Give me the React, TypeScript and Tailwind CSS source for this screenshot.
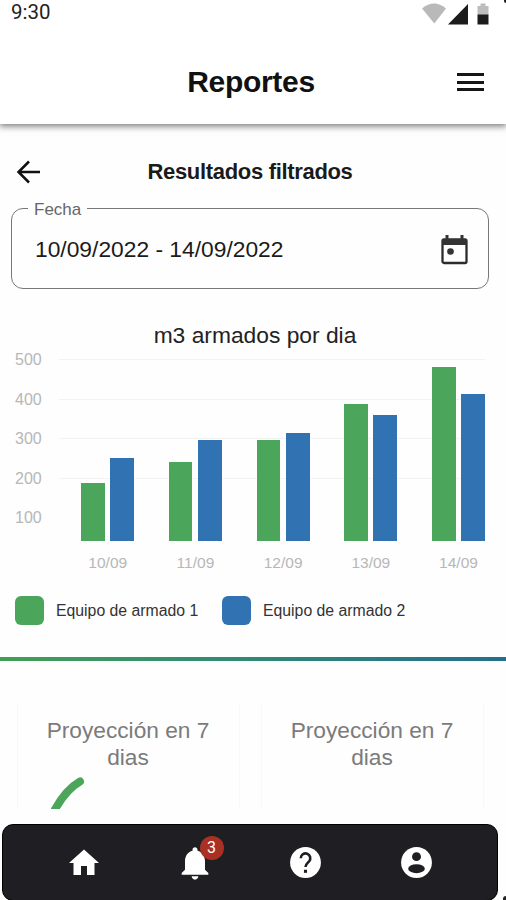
import React from 'react'

const CHART_FLOOR = 42
const PX_PER_UNIT = 0.395

const days = [
  { label: '10/09', team1: 190, team2: 253 },
  { label: '11/09', team1: 241, team2: 298 },
  { label: '12/09', team1: 298, team2: 315 },
  { label: '13/09', team1: 390, team2: 360 },
  { label: '14/09', team1: 482, team2: 413 },
]

const ticks = [500, 400, 300, 200, 100]

const barHeight = (value: number) => (value - CHART_FLOOR) * PX_PER_UNIT

const StatusBar: React.FC = () => (
  <div className="flex h-[26px] justify-between pl-[11px] pr-[16px]">
    <span className="font-[Roboto,sans-serif] text-[20.5px] leading-[25px] text-[#222]">9:30</span>
    <svg className="mt-[3px] h-[22px] w-[68px]" viewBox="0 0 68 22">
      <path d="M0 5.5Q12 -4.500 24 5.500L12.300 20.500z" fill="#b9b9b9" />
      <path d="M46 1v20.500H26z" fill="#1c1c1c" />
      <path d="M55.500 3h3V.5h5V3h3v9h-11z" fill="#bdbdbd" />
      <path d="M55.500 11.500h11v10h-11z" fill="#1c1c1c" />
    </svg>
  </div>
)

const Header: React.FC = () => (
  <header className="h-[124px] shrink-0 bg-white shadow-[0_1px_7px_1px_rgba(0,0,0,0.55)]">
    <StatusBar />
    <div className="grid h-[112px] grid-cols-[1fr_auto_1fr] items-center pr-[4px]">
      <h1 className="col-start-2 pb-[2px] text-[30px] font-bold tracking-[-0.3px] text-[#111]">Reportes</h1>
      <div className="mr-[18px] flex flex-col gap-[4.500px] justify-self-end">
        <div className="h-[3px] w-[27px] bg-[#161616]" />
        <div className="h-[3px] w-[27px] bg-[#161616]" />
        <div className="h-[3px] w-[27px] bg-[#161616]" />
      </div>
    </div>
  </header>
)

const DateField: React.FC = () => (
  <fieldset className="ml-[11px] mr-[17px] mt-[13px] h-[91px] rounded-[12px] border border-[#777] pl-[16px]">
    <legend className="px-[6px] pt-[3px] text-[17px] leading-[18px] text-[#666]">Fecha</legend>
    <div className="flex h-[61px] items-center justify-between pl-[7px] pr-[20px]">
      <span className="text-[22.800px] text-[#1b1b1b]">10/09/2022 - 14/09/2022</span>
      <svg className="h-[30px] w-[27px]" viewBox="0 0 27 30">
        <rect x="1.500" y="4.500" width="24" height="23.500" rx="1.500" fill="none" stroke="#2c2c2c" strokeWidth="2.300" />
        <path d="M1 4h25v6H1zM4.500 0h3v5h-3zM19.500 0h3v5h-3z" fill="#333" />
        <circle cx="9.500" cy="16.500" r="3.300" fill="#333" />
      </svg>
    </div>
  </fieldset>
)

const Chart: React.FC = () => (
  <section>
    <h3 className="mt-[32px] pl-[4px] text-center text-[22.800px] leading-[28px] text-[#222]">m3 armados por dia</h3>
    <div className="mt-[-8px] flex pl-[15px] pr-[21px]">
      {/* Y axis */}
      <div className="mt-[9px] w-[45px] text-[16px] text-[#b7b7b7]">
        {ticks.map((tick) => (
          <div className="h-[39.500px] leading-[20px]" key={tick}>
            {tick}
          </div>
        ))}
      </div>

      {/* Bars over the grid lines */}
      <div className="grid h-[231px] flex-1">
        <div className="col-start-1 row-start-1 pt-[18px]">
          {ticks.slice(0, 4).map((tick) => (
            <div className="h-[39.500px] border-t border-[#f3f3f3]" key={tick} />
          ))}
        </div>
        <div className="z-10 col-start-1 row-start-1 flex items-end gap-[34.700px] pl-[22px]">
          {days.map((day) => (
            <div className="w-[53px] shrink-0" key={day.label}>
              <div className="flex items-end justify-between">
                <div className="w-[23.500px] bg-[#4ba55a]" style={{ height: barHeight(day.team1) }} />
                <div className="w-[24px] bg-[#3173b2]" style={{ height: barHeight(day.team2) }} />
              </div>
              <p className="h-[31px] pt-[11px] text-center text-[15.500px] leading-[22px] text-[#b7b7b7]">{day.label}</p>
            </div>
          ))}
        </div>
      </div>
    </div>

    {/* Legend */}
    <div className="mt-[24px] flex items-center pl-[15px] text-[15.800px] leading-[29px] text-[#333]">
      <div className="h-[29px] w-[29px] rounded-[6px] bg-[#4ba55a]" />
      <span className="ml-[12px] w-[166px]">Equipo de armado 1</span>
      <div className="h-[29px] w-[29px] rounded-[6px] bg-[#3173b2]" />
      <span className="ml-[12px]">Equipo de armado 2</span>
    </div>
  </section>
)

const ProjectionCard: React.FC<{ children?: React.ReactNode }> = ({ children }) => (
  <div className="h-[106px] w-[223px] overflow-hidden border-x border-[#f8f8f8]">
    <p className="mx-auto mt-[14px] w-[180px] pr-px text-center text-[22.700px] leading-[26.500px] text-[#7b7b7b]">
      Proyección en 7 dias
    </p>
    {children}
  </div>
)

const BottomNav: React.FC = () => (
  <nav className="ml-[2px] mt-[15px] grid h-[77px] w-[496px] shrink-0 grid-cols-[repeat(4,111px)] items-center rounded-[11px] border border-black bg-[#1f1f23] pl-[25px] text-white">
    <svg className="h-[36px] w-[36px] justify-self-center" viewBox="0 0 24 24" fill="currentColor">
      <path d="M10 20v-6h4v6h5v-8h3L12 3 2 12h3v8z" />
    </svg>
    <div className="relative justify-self-center">
      <svg className="h-[40px] w-[40px]" viewBox="0 0 24 24" fill="currentColor">
        <path d="M12 22c1.100 0 2-.9 2-2h-4c0 1.100.89 2 2 2zm6-6v-5c0-3.070-1.640-5.640-4.500-6.320V4c0-.83-.67-1.500-1.500-1.500s-1.500.67-1.500 1.500v.68C7.630 5.360 6 7.920 6 11v5l-2 2v1h16v-1l-2-2z" />
      </svg>
      <span className="absolute -top-[7px] left-[25px] h-[24px] w-[24px] rounded-full bg-[#ab3024] text-center font-[Roboto,sans-serif] text-[16px] leading-[24px]">
        3
      </span>
    </div>
    <svg className="h-[37px] w-[37px] justify-self-center" viewBox="0 0 24 24">
      <circle cx="12" cy="12" r="10" fill="currentColor" />
      <path d="M8.900 9.200a3.100 3.100 0 1 1 5.400 2.100c-1.300 1.300-2.300 1.900-2.300 3.600" fill="none" stroke="#1f1f23" strokeWidth="1.700" />
      <rect x="11" y="16.700" width="2" height="2" fill="#1f1f23" />
    </svg>
    <svg className="h-[37px] w-[37px] justify-self-center" viewBox="0 0 24 24">
      <circle cx="12" cy="12" r="10" fill="currentColor" />
      <circle cx="12" cy="8.200" r="2.900" fill="#1f1f23" />
      <ellipse cx="12" cy="16" rx="5.400" ry="2.900" fill="#1f1f23" />
    </svg>
  </nav>
)

const App: React.FC = () => (
  <div className="relative flex h-[900px] w-[506px] flex-col overflow-hidden bg-[#fefefe] font-['Liberation_Sans',Arial,sans-serif]">
    <Header />

    <main className="h-[685px] shrink-0 overflow-hidden">
      <div className="mt-[31px] grid h-[30px] grid-cols-[1fr_auto_1fr] items-center pr-[6px]">
        <svg className="ml-[16px] h-[24px] w-[25px]" viewBox="0 0 25 24" fill="none" stroke="#111" strokeWidth="2.500">
          <path d="M24 12H3M13 1.500L2.500 12 13 22.500" />
        </svg>
        <h2 className="text-[22px] font-bold tracking-[-0.320px] text-[#1a1a1a]">Resultados filtrados</h2>
      </div>
      <DateField />
      <Chart />
      <div className="mt-[32px] h-[4px] bg-linear-to-r from-[#3fa054] to-[#22708c]" />
      <div className="mt-[42px] flex gap-[21px] pl-[17px]">
        <ProjectionCard>
          <svg className="ml-[33px] mt-[5px] h-[40px] w-[40px]" viewBox="0 0 40 40" fill="none">
            <path d="M2 38Q14 15 29 6.500" stroke="#4ba55a" strokeWidth="8" strokeLinecap="round" />
          </svg>
        </ProjectionCard>
        <ProjectionCard />
      </div>
    </main>

    <BottomNav />

    {/* Rounded screen corners */}
    <div className="absolute right-0 top-0 h-[3px] w-[2px] rounded-bl-full bg-[#222]" />
    <div className="absolute bottom-0 right-0 h-[4px] w-[3px] rounded-tl-full bg-[#222]" />
  </div>
)

export default App
